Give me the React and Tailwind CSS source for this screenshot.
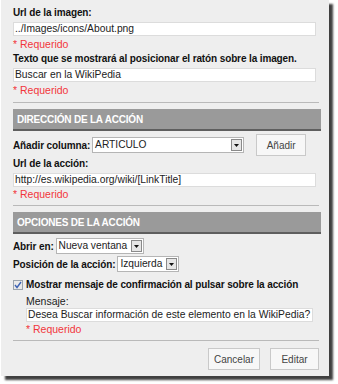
import React from 'react';

const font = { fontFamily: '"Liberation Sans", Arial, sans-serif' };

const Label = ({ children, className = '' }) => (
  <div className={`text-[10px] font-bold leading-[13px] tracking-[-0.12px] text-[#111] whitespace-nowrap ${className}`}>{children}</div>
);

const Required = ({ className = '' }) => (
  <div className={`text-[10.5px] leading-[13px] text-[#f2353b] ${className}`}>* Requerido</div>
);

const TextBox = ({ value, className = '' }) => (
  <div className={`h-[14px] bg-white border border-[#dcdcdc] px-[1px] text-[10.3px] leading-[12px] text-[#222] whitespace-nowrap overflow-hidden ${className}`}>
    {value}
  </div>
);

const Arrow = () => (
  <div className="w-[11px] h-[12px] my-[1px] mr-[1px] flex items-center justify-center bg-[#e6e6e6] border border-[#8a8a8a]">
    <svg width="5" height="3" viewBox="0 0 5 3">
      <path d="M0 0h5L2.5 3z" fill="#111" />
    </svg>
  </div>
);

const Select = ({ value, className = '' }) => (
  <div className={`h-[16px] flex items-stretch bg-white border border-[#b5b5b5] ${className}`}>
    <span className="flex-1 px-[2px] text-[10.2px] leading-[14px] text-[#222] whitespace-nowrap overflow-hidden">{value}</span>
    <Arrow />
  </div>
);

const Button = ({ children, className = '' }) => (
  <div className={`h-[22px] flex items-center justify-center bg-[#f7f7f7] border border-[#c9c9c9] text-[10px] text-[#444] ${className}`}>
    {children}
  </div>
);

const SectionHeader = ({ children }) => (
  <div className="h-[22px] mr-[-2px] flex items-center pl-[4px] bg-[#9a9a9a] border-b-2 border-[#5e5e5e] text-[10px] font-bold tracking-[-0.2px] text-white">
    {children}
  </div>
);

const Divider = () => <div className="h-px bg-[#b9b9b9]" />;

export default function App() {
  return (
    <div className="w-[338px] h-[384px] bg-white" style={font}>
      <div className="w-[328px] h-[376px] ml-[1px] bg-[#eeeeee] shadow-[4px_4px_2px_rgba(0,0,0,0.75)] pl-[12px] pr-[10px] pt-[6px]">
        <Label>Url de la imagen:</Label>
        <TextBox className="mt-[3px] mr-[3px]" value="../Images/icons/About.png" />
        <Required className="mt-[2px]" />
        <Label className="mt-[1px]">Texto que se mostrará al posicionar el ratón sobre la imagen.</Label>
        <TextBox className="mt-[3px] mr-[3px]" value="Buscar en la WikiPedia" />
        <Required className="mt-[2px]" />

        <div className="mt-[5px]"><Divider /></div>
        <div className="mt-[6px]"><SectionHeader>DIRECCIÓN DE LA ACCIÓN</SectionHeader></div>

        <div className="mt-[3px] flex items-center">
          <Label>Añadir columna:</Label>
          <Select className="ml-[2px] w-[152px]" value="ARTICULO" />
          <Button className="ml-[12px] w-[50px]">Añadir</Button>
        </div>
        <Label className="mt-[1px]">Url de la acción:</Label>
        <TextBox className="mt-[3px] mr-[3px]" value="http://es.wikipedia.org/wiki/[LinkTitle]" />
        <Required className="mt-[1px]" />

        <div className="mt-[4px]"><Divider /></div>
        <div className="mt-[6px]"><SectionHeader>OPCIONES DE LA ACCIÓN</SectionHeader></div>

        <div className="mt-[4px] flex items-center">
          <Label>Abrir en:</Label>
          <Select className="ml-[2px] w-[88px]" value="Nueva ventana" />
        </div>
        <div className="mt-[2px] flex items-center">
          <Label>Posición de la acción:</Label>
          <Select className="ml-[2px] w-[62px]" value="Izquierda" />
        </div>
        <div className="mt-[6px] flex items-center">
          <div className="w-[10px] h-[10px] bg-[#e9e9e9] border border-[#9aa3ad] flex items-center justify-center">
            <svg width="8" height="8" viewBox="0 0 8 8">
              <path d="M1 4l2 2.5L7 1" stroke="#3d63b5" strokeWidth="1.4" fill="none" />
            </svg>
          </div>
          <Label className="ml-[3px]">Mostrar mensaje de confirmación al pulsar sobre la acción</Label>
        </div>

        <div className="pl-[13px] mt-[4px]">
          <div className="text-[10.5px] leading-[12px] text-[#222]">Mensaje:</div>
          <TextBox className="mt-[1px] mr-[6px]" value="Desea Buscar información de este elemento en la WikiPedia?" />
          <Required className="mt-[1px]" />
        </div>

        <div className="mt-[4px]"><Divider /></div>
        <div className="mt-[7px] flex justify-end gap-[10px]">
          <Button className="w-[52px]">Cancelar</Button>
          <Button className="w-[49px]">Editar</Button>
        </div>
      </div>
    </div>
  );
}
